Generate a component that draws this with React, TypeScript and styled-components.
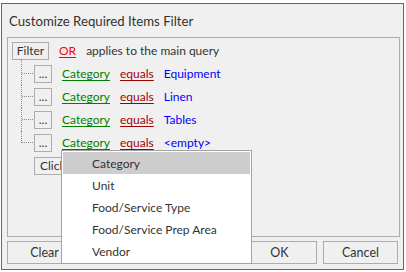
import React from 'react';
import styled, { createGlobalStyle } from 'styled-components';

const GlobalStyle = createGlobalStyle`
    html, body {
        margin: 0;
        padding: 0;
        background: #ffffff;
    }
    body {
        padding: 3px 0 0 1px;
        font-family: Lato, "Noto Sans", "Liberation Sans", sans-serif;
        font-size: 12px;
        color: #333333;
    }
`;

const Window = styled.div`
    position: relative;
    box-sizing: border-box;
    width: 403px;
    height: 267px;
    border: 1px solid #1c79c6;
    background: #f0f0f0;
    display: flex;
    flex-direction: column;
`;

const Title = styled.div`
    height: 33px;
    padding-left: 7px;
    display: flex;
    align-items: center;
    font-size: 13.2px;
    color: #333333;
`;

const Panel = styled.div`
    box-sizing: border-box;
    margin: 0 3px 0 5px;
    height: 200px;
    border: 1px solid #adadad;
    padding: 1px 0 0 4px;
`;

const Row = styled.div`
    height: 23px;
    display: flex;
    align-items: center;
    gap: 10px;
    white-space: nowrap;
`;

const Tree = styled.div`
    padding-left: 22px;
`;

const TreeRow = styled(Row)<{ $first?: boolean; $last?: boolean }>`
    position: relative;

    &::before {
        content: '';
        position: absolute;
        left: -13px;
        top: ${p => (p.$first ? '-3px' : '0')};
        height: ${p => (p.$first ? (p.$last ? '15px' : '26px') : p.$last ? '12px' : '23px')};
        border-left: 1px dotted #8a8a8a;
    }

    &::after {
        content: '';
        position: absolute;
        left: -12px;
        top: 11px;
        width: 11px;
        border-top: 1px dotted #8a8a8a;
    }
`;

const Btn = styled.button<{ $w?: number }>`
    box-sizing: border-box;
    height: 18px;
    ${p => (p.$w ? `width: ${p.$w}px;` : 'padding: 0 5px;')}
    border: 1px solid #adadad;
    background: #f0f0f0;
    font-family: inherit;
    font-size: 12px;
    color: #333333;
    display: flex;
    align-items: center;
    justify-content: center;
    line-height: 1;
    flex-shrink: 0;
`;

const Link = styled.span<{ $color: string }>`
    color: ${p => p.$color};
    text-decoration: underline;
    text-underline-offset: 2px;
`;

const Value = styled.span`
    color: #0000ff;
`;

const Plain = styled.span`
    color: #333333;
`;

const Footer = styled.div`
    display: flex;
    align-items: center;
    padding: 4px 5px 0 5px;
    gap: 6px;
`;

const FooterBtn = styled.button`
    box-sizing: border-box;
    width: 75px;
    height: 23px;
    border: 1px solid #adadad;
    background: #f0f0f0;
    font-family: inherit;
    font-size: 12.5px;
    color: #333333;
`;

const Spacer = styled.div`
    flex: 1;
`;

const Dropdown = styled.div`
    position: absolute;
    left: 59px;
    top: 146px;
    box-sizing: border-box;
    width: 191px;
    height: 114px;
    padding: 1px;
    border: 1px solid #a3a3a3;
    background: #ffffff;
`;

const Item = styled.div<{ $selected?: boolean }>`
    height: 22px;
    display: flex;
    align-items: center;
    padding-left: 29px;
    background: ${p => (p.$selected ? '#cdcdcd' : 'transparent')};
    color: #333333;
`;

const conditions = [
    { value: 'Equipment' },
    { value: 'Linen' },
    { value: 'Tables' },
    { value: '<empty>' },
];

const fields = ['Category', 'Unit', 'Food/Service Type', 'Food/Service Prep Area', 'Vendor'];

export default function App() {
    return (
        <>
            <GlobalStyle />
            <Window>
                <Title>Customize Required Items Filter</Title>
                <Panel>
                    <Row>
                        <Btn $w={37}>Filter</Btn>
                        <Link $color="#ff0000">OR</Link>
                        <Plain>applies to the main query</Plain>
                    </Row>
                    <Tree>
                        {conditions.map((c, i) => (
                            <TreeRow key={i} $first={i === 0} $last={i === conditions.length - 1}>
                                <Btn $w={18}>...</Btn>
                                <Link $color="#008000">Category</Link>
                                <Link $color="#a00000">equals</Link>
                                <Value>{c.value}</Value>
                            </TreeRow>
                        ))}
                        <Row>
                            <Btn>Click here to add a new condition</Btn>
                        </Row>
                    </Tree>
                </Panel>
                <Footer>
                    <FooterBtn>Clear</FooterBtn>
                    <Spacer />
                    <FooterBtn>OK</FooterBtn>
                    <FooterBtn>Cancel</FooterBtn>
                </Footer>
                <Dropdown>
                    {fields.map((f, i) => (
                        <Item key={f} $selected={i === 0}>{f}</Item>
                    ))}
                </Dropdown>
            </Window>
        </>
    );
}
